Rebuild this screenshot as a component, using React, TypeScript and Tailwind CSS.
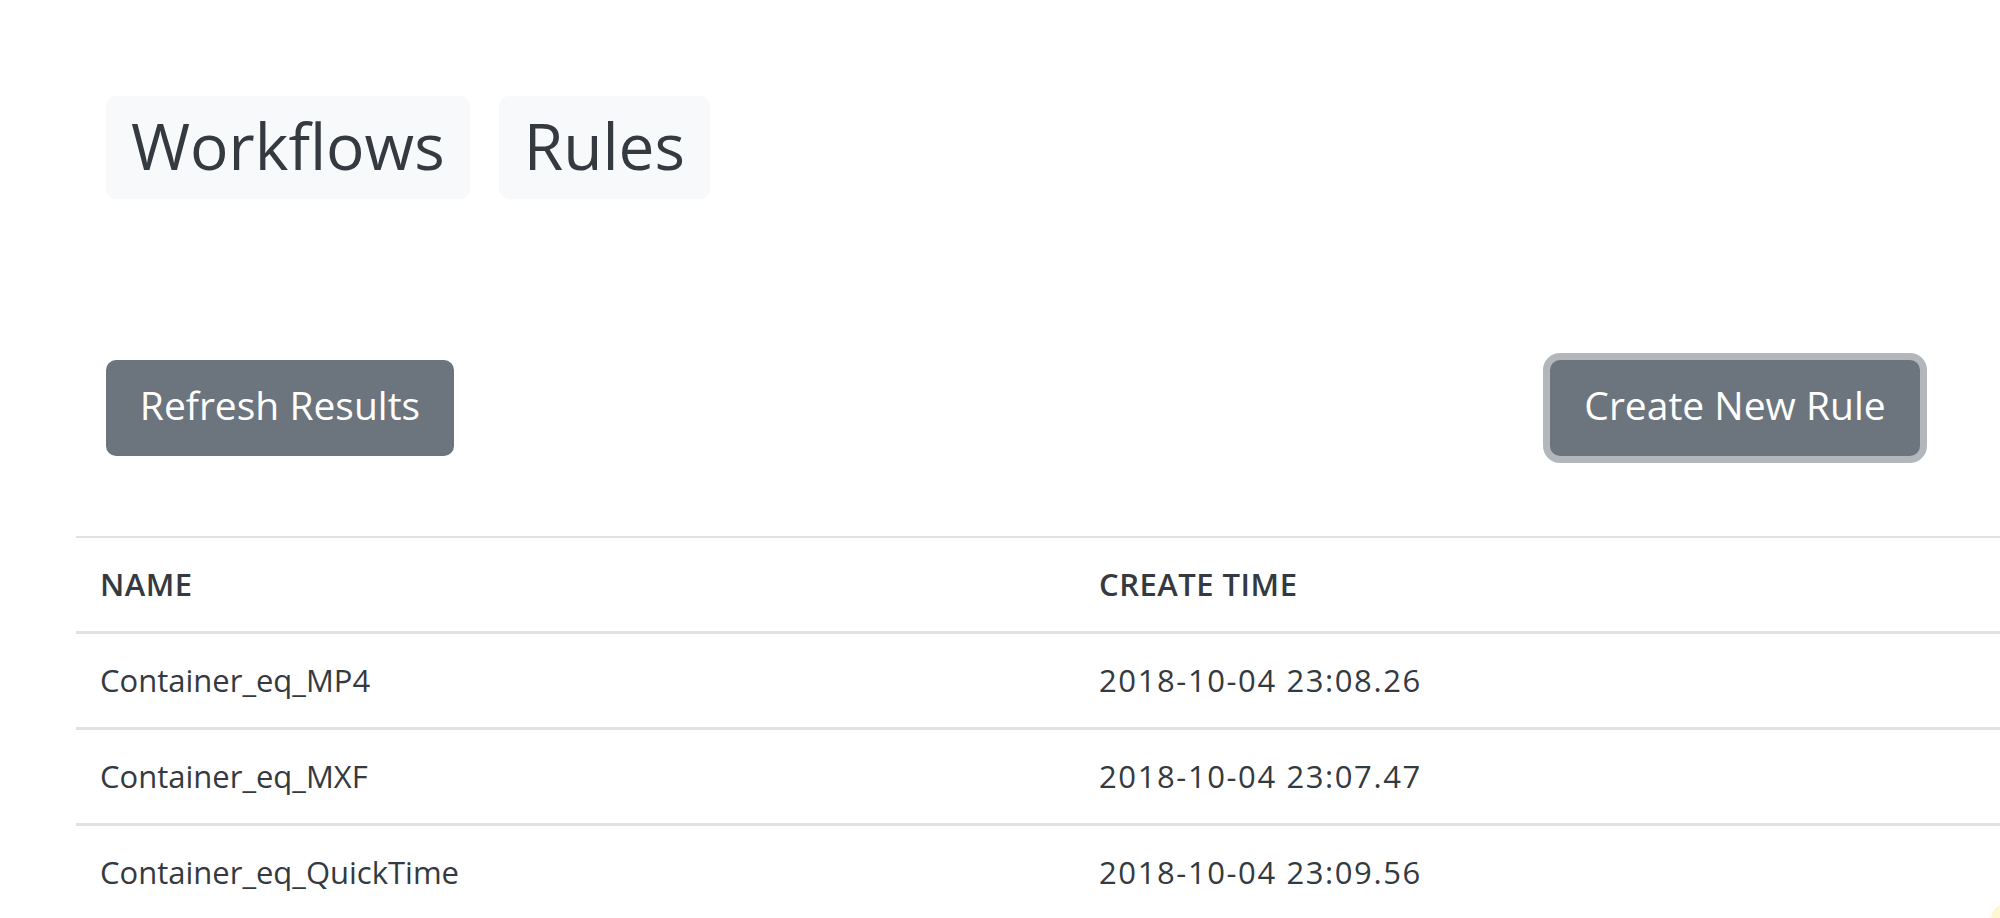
const rules = [
  { name: 'Container_eq_MP4', created: '2018-10-04 23:08.26' },
  { name: 'Container_eq_MXF', created: '2018-10-04 23:07.47' },
  { name: 'Container_eq_QuickTime', created: '2018-10-04 23:09.56' },
];

export default function App() {
  return (
    <div
      className="relative h-[918px] w-[2000px] overflow-hidden bg-white text-[#343a40]"
      style={{ fontFamily: '"Open Sans", "Noto Sans", sans-serif' }}
    >
      <div className="flex gap-[29px] pl-[106px] pt-[96px]">
        <div className="flex h-[103px] items-center rounded-[10px] bg-[#f8f9fa] px-[25px] pb-[4px] text-[64px]">
          Workflows
        </div>
        <div className="flex h-[103px] items-center rounded-[10px] bg-[#f8f9fa] px-[25px] pb-[4px] text-[64px]">
          Rules
        </div>
      </div>

      <div className="mt-[161px] flex items-center justify-between pl-[106px] pr-[80px]">
        <button
          type="button"
          className="h-[96px] w-[348px] rounded-[10px] bg-[#6c757d] pb-[5px] text-[39px] text-white"
        >
          Refresh Results
        </button>
        <button
          type="button"
          className="h-[96px] w-[370px] rounded-[10px] bg-[#6c757d] pb-[5px] text-[39px] text-white shadow-[0_0_0_7px_#b3b7bb]"
        >
          Create New Rule
        </button>
      </div>

      <table className="ml-[76px] mt-[80px] w-[2000px] border-collapse text-[31px]">
        <thead>
          <tr className="border-t-2 border-b-[3px] border-[#dee2e6]">
            <th className="h-[95px] w-[999px] px-[24px] text-left font-semibold tracking-[0.5px]">
              NAME
            </th>
            <th className="h-[95px] px-[24px] text-left font-semibold tracking-[0.5px]">
              CREATE TIME
            </th>
          </tr>
        </thead>
        <tbody>
          {rules.map((r) => (
            <tr key={r.name} className="border-b-[3px] border-[#dee2e6]">
              <td className="h-[96px] px-[24px]">{r.name}</td>
              <td className="h-[96px] px-[24px] tracking-[1.6px]">{r.created}</td>
            </tr>
          ))}
        </tbody>
      </table>

      <div className="absolute bottom-[-30px] right-[-30px] h-[46px] w-[40px] rounded-full bg-[#fdf8cf]" />
    </div>
  );
}
